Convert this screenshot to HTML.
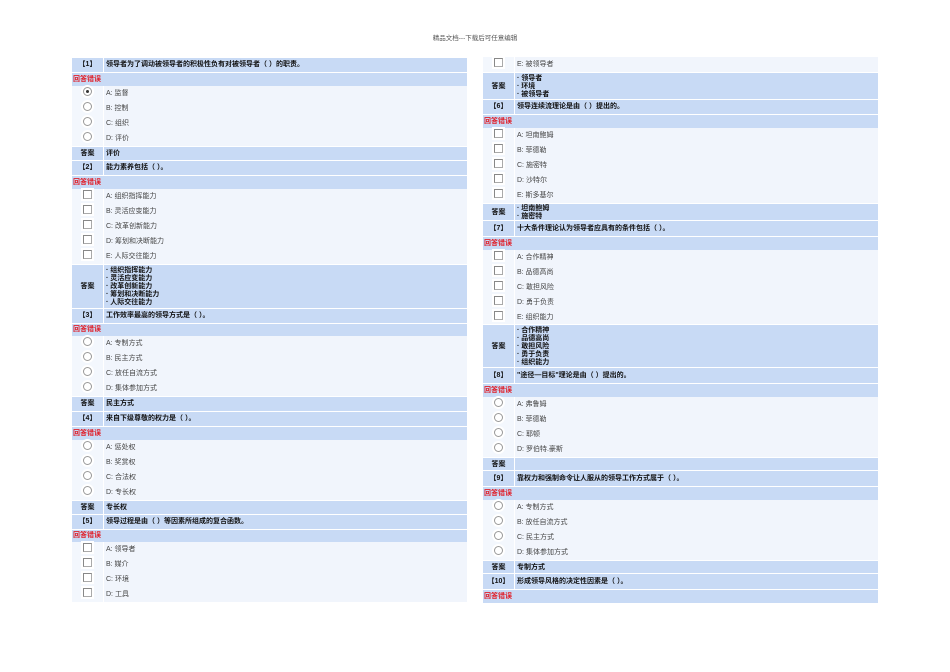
<!DOCTYPE html>
<html><head><meta charset="utf-8"><style>
body{margin:0;width:950px;height:672px;background:#fff;position:relative;overflow:hidden;font-family:"Liberation Sans","Noto Sans CJK SC",sans-serif;}
.t{position:absolute;top:32px;left:0;width:950px;text-align:center;font-size:6.5px;color:#555;}
.r{position:absolute;width:395px;font-size:7px;line-height:8px;}
.q,.a,.w{border-top:1px solid #fff;box-sizing:border-box;}
.c1{position:absolute;left:0;top:0;bottom:0;width:31px;display:flex;align-items:center;justify-content:center;}
.c2{position:absolute;left:32px;right:0;top:0;bottom:0;display:flex;align-items:center;padding-left:2px;}
.q .c1,.q .c2,.a .c1,.a .c2{background:#c8daf5;font-weight:bold;color:#111;}
.o .c1{background:#f3f7fd;}
.o .c2{background:#f1f5fc;color:#444;}
.w{background:#c8daf5;color:#e0202a;font-weight:bold;display:flex;align-items:center;padding-left:1px;}
.rad{width:7px;height:7px;border:1px solid #999;border-radius:50%;background:#fff;margin-top:-4px;position:relative;box-shadow:0 0 0 2px #fff;}
.rad.on::after{content:"";position:absolute;left:2px;top:2px;width:3px;height:3px;border-radius:50%;background:#333;}
.chk{width:7px;height:7px;border:1px solid #aaa;border-top-color:#888;border-left-color:#888;background:#fff;margin-top:-4px;box-shadow:0 0 0 2px #fff;}
.ml{flex-direction:column;align-items:flex-start;justify-content:center;}
</style></head><body>
<div class="t">精品文档---下载后可任意编辑</div>

<!-- LEFT -->
<div class="r q" style="left:72px;top:57px;height:15px"><div class="c1">【1】</div><div class="c2">领导者为了调动被领导者的积极性负有对被领导者（ ）的职责。</div></div>
<div class="r w" style="left:72px;top:72px;height:14px">回答错误</div>
<div class="r o" style="left:72px;top:86px;height:15px"><div class="c1"><div class="rad on"></div></div><div class="c2">A: 监督</div></div>
<div class="r o" style="left:72px;top:101px;height:15px"><div class="c1"><div class="rad"></div></div><div class="c2">B: 控制</div></div>
<div class="r o" style="left:72px;top:116px;height:15px"><div class="c1"><div class="rad"></div></div><div class="c2">C: 组织</div></div>
<div class="r o" style="left:72px;top:131px;height:15px"><div class="c1"><div class="rad"></div></div><div class="c2">D: 评价</div></div>
<div class="r a" style="left:72px;top:146px;height:14px"><div class="c1">答案</div><div class="c2">评价</div></div>
<div class="r q" style="left:72px;top:160px;height:15px"><div class="c1">【2】</div><div class="c2">能力素养包括（ ）。</div></div>
<div class="r w" style="left:72px;top:175px;height:14px">回答错误</div>
<div class="r o" style="left:72px;top:189px;height:15px"><div class="c1"><div class="chk"></div></div><div class="c2">A: 组织指挥能力</div></div>
<div class="r o" style="left:72px;top:204px;height:15px"><div class="c1"><div class="chk"></div></div><div class="c2">B: 灵活应变能力</div></div>
<div class="r o" style="left:72px;top:219px;height:15px"><div class="c1"><div class="chk"></div></div><div class="c2">C: 改革创新能力</div></div>
<div class="r o" style="left:72px;top:234px;height:15px"><div class="c1"><div class="chk"></div></div><div class="c2">D: 筹划和决断能力</div></div>
<div class="r o" style="left:72px;top:249px;height:15px"><div class="c1"><div class="chk"></div></div><div class="c2">E: 人际交往能力</div></div>
<div class="r a" style="left:72px;top:264px;height:44px"><div class="c1">答案</div><div class="c2 ml"><div>· 组织指挥能力</div><div>· 灵活应变能力</div><div>· 改革创新能力</div><div>· 筹划和决断能力</div><div>· 人际交往能力</div></div></div>
<div class="r q" style="left:72px;top:308px;height:15px"><div class="c1">【3】</div><div class="c2">工作效率最高的领导方式是（ ）。</div></div>
<div class="r w" style="left:72px;top:323px;height:13px">回答错误</div>
<div class="r o" style="left:72px;top:336px;height:15px"><div class="c1"><div class="rad"></div></div><div class="c2">A: 专制方式</div></div>
<div class="r o" style="left:72px;top:351px;height:15px"><div class="c1"><div class="rad"></div></div><div class="c2">B: 民主方式</div></div>
<div class="r o" style="left:72px;top:366px;height:15px"><div class="c1"><div class="rad"></div></div><div class="c2">C: 放任自流方式</div></div>
<div class="r o" style="left:72px;top:381px;height:15px"><div class="c1"><div class="rad"></div></div><div class="c2">D: 集体参加方式</div></div>
<div class="r a" style="left:72px;top:396px;height:15px"><div class="c1">答案</div><div class="c2">民主方式</div></div>
<div class="r q" style="left:72px;top:411px;height:15px"><div class="c1">【4】</div><div class="c2">来自下级尊敬的权力是（ ）。</div></div>
<div class="r w" style="left:72px;top:426px;height:14px">回答错误</div>
<div class="r o" style="left:72px;top:440px;height:15px"><div class="c1"><div class="rad"></div></div><div class="c2">A: 惩处权</div></div>
<div class="r o" style="left:72px;top:455px;height:15px"><div class="c1"><div class="rad"></div></div><div class="c2">B: 奖赏权</div></div>
<div class="r o" style="left:72px;top:470px;height:15px"><div class="c1"><div class="rad"></div></div><div class="c2">C: 合法权</div></div>
<div class="r o" style="left:72px;top:485px;height:15px"><div class="c1"><div class="rad"></div></div><div class="c2">D: 专长权</div></div>
<div class="r a" style="left:72px;top:500px;height:14px"><div class="c1">答案</div><div class="c2">专长权</div></div>
<div class="r q" style="left:72px;top:514px;height:15px"><div class="c1">【5】</div><div class="c2">领导过程是由（ ）等因素所组成的复合函数。</div></div>
<div class="r w" style="left:72px;top:529px;height:13px">回答错误</div>
<div class="r o" style="left:72px;top:542px;height:15px"><div class="c1"><div class="chk"></div></div><div class="c2">A: 领导者</div></div>
<div class="r o" style="left:72px;top:557px;height:15px"><div class="c1"><div class="chk"></div></div><div class="c2">B: 媒介</div></div>
<div class="r o" style="left:72px;top:572px;height:15px"><div class="c1"><div class="chk"></div></div><div class="c2">C: 环境</div></div>
<div class="r o" style="left:72px;top:587px;height:15px"><div class="c1"><div class="chk"></div></div><div class="c2">D: 工具</div></div>

<!-- RIGHT -->
<div class="r o" style="left:483px;top:57px;height:15px"><div class="c1"><div class="chk"></div></div><div class="c2">E: 被领导者</div></div>
<div class="r a" style="left:483px;top:72px;height:28px"><div class="c1">答案</div><div class="c2 ml"><div>· 领导者</div><div>· 环境</div><div>· 被领导者</div></div></div>
<div class="r q" style="left:483px;top:99px;height:15px"><div class="c1">【6】</div><div class="c2">领导连续流理论是由（ ）提出的。</div></div>
<div class="r w" style="left:483px;top:114px;height:14px">回答错误</div>
<div class="r o" style="left:483px;top:128px;height:15px"><div class="c1"><div class="chk"></div></div><div class="c2">A: 坦南鲍姆</div></div>
<div class="r o" style="left:483px;top:143px;height:15px"><div class="c1"><div class="chk"></div></div><div class="c2">B: 菲德勒</div></div>
<div class="r o" style="left:483px;top:158px;height:15px"><div class="c1"><div class="chk"></div></div><div class="c2">C: 施密特</div></div>
<div class="r o" style="left:483px;top:173px;height:15px"><div class="c1"><div class="chk"></div></div><div class="c2">D: 沙特尔</div></div>
<div class="r o" style="left:483px;top:188px;height:15px"><div class="c1"><div class="chk"></div></div><div class="c2">E: 斯多基尔</div></div>
<div class="r a" style="left:483px;top:203px;height:18px"><div class="c1">答案</div><div class="c2 ml"><div>· 坦南鲍姆</div><div>· 施密特</div></div></div>
<div class="r q" style="left:483px;top:220px;height:16px"><div class="c1">【7】</div><div class="c2">十大条件理论认为领导者应具有的条件包括（ ）。</div></div>
<div class="r w" style="left:483px;top:236px;height:14px">回答错误</div>
<div class="r o" style="left:483px;top:250px;height:15px"><div class="c1"><div class="chk"></div></div><div class="c2">A: 合作精神</div></div>
<div class="r o" style="left:483px;top:265px;height:15px"><div class="c1"><div class="chk"></div></div><div class="c2">B: 品德高尚</div></div>
<div class="r o" style="left:483px;top:280px;height:15px"><div class="c1"><div class="chk"></div></div><div class="c2">C: 敢担风险</div></div>
<div class="r o" style="left:483px;top:295px;height:15px"><div class="c1"><div class="chk"></div></div><div class="c2">D: 勇于负责</div></div>
<div class="r o" style="left:483px;top:310px;height:15px"><div class="c1"><div class="chk"></div></div><div class="c2">E: 组织能力</div></div>
<div class="r a" style="left:483px;top:324px;height:44px"><div class="c1">答案</div><div class="c2 ml"><div>· 合作精神</div><div>· 品德高尚</div><div>· 敢担风险</div><div>· 勇于负责</div><div>· 组织能力</div></div></div>
<div class="r q" style="left:483px;top:367px;height:16px"><div class="c1">【8】</div><div class="c2">"途径—目标"理论是由（ ）提出的。</div></div>
<div class="r w" style="left:483px;top:383px;height:14px">回答错误</div>
<div class="r o" style="left:483px;top:397px;height:15px"><div class="c1"><div class="rad"></div></div><div class="c2">A: 弗鲁姆</div></div>
<div class="r o" style="left:483px;top:412px;height:15px"><div class="c1"><div class="rad"></div></div><div class="c2">B: 菲德勒</div></div>
<div class="r o" style="left:483px;top:427px;height:15px"><div class="c1"><div class="rad"></div></div><div class="c2">C: 耶顿</div></div>
<div class="r o" style="left:483px;top:442px;height:15px"><div class="c1"><div class="rad"></div></div><div class="c2">D: 罗伯特.豪斯</div></div>
<div class="r a" style="left:483px;top:457px;height:14px"><div class="c1">答案</div><div class="c2"></div></div>
<div class="r q" style="left:483px;top:470px;height:16px"><div class="c1">【9】</div><div class="c2">靠权力和强制命令让人服从的领导工作方式属于（ ）。</div></div>
<div class="r w" style="left:483px;top:486px;height:14px">回答错误</div>
<div class="r o" style="left:483px;top:500px;height:15px"><div class="c1"><div class="rad"></div></div><div class="c2">A: 专制方式</div></div>
<div class="r o" style="left:483px;top:515px;height:15px"><div class="c1"><div class="rad"></div></div><div class="c2">B: 放任自流方式</div></div>
<div class="r o" style="left:483px;top:530px;height:15px"><div class="c1"><div class="rad"></div></div><div class="c2">C: 民主方式</div></div>
<div class="r o" style="left:483px;top:545px;height:15px"><div class="c1"><div class="rad"></div></div><div class="c2">D: 集体参加方式</div></div>
<div class="r a" style="left:483px;top:560px;height:14px"><div class="c1">答案</div><div class="c2">专制方式</div></div>
<div class="r q" style="left:483px;top:573px;height:16px"><div class="c1">【10】</div><div class="c2">形成领导风格的决定性因素是（ ）。</div></div>
<div class="r w" style="left:483px;top:589px;height:14px">回答错误</div>
</body></html>
